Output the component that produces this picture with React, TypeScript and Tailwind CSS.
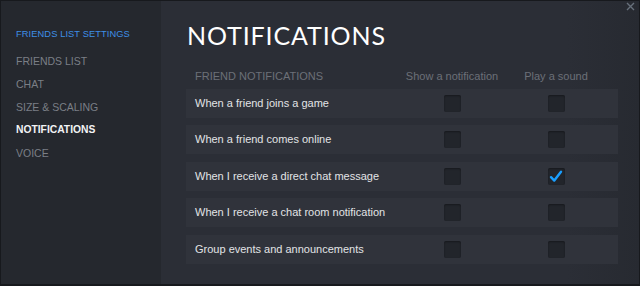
import React from "react";

type Row = {
  label: string;
  notify: boolean;
  sound: boolean;
};

const rows: Row[] = [
  { label: "When a friend joins a game", notify: false, sound: false },
  { label: "When a friend comes online", notify: false, sound: false },
  { label: "When I receive a direct chat message", notify: false, sound: true },
  { label: "When I receive a chat room notification", notify: false, sound: false },
  { label: "Group events and announcements", notify: false, sound: false },
];

const navItems = ["FRIENDS LIST", "CHAT", "SIZE & SCALING", "NOTIFICATIONS", "VOICE"];

const Checkbox = ({ checked }: { checked: boolean }) => (
  <div className="flex h-[17px] w-[17px] items-center justify-center rounded-[2px] bg-[#22252b] shadow-[inset_0_1px_2px_rgba(0,0,0,0.35)]">
    {checked && (
      <svg width="14" height="13" viewBox="0 0 14 13" fill="none">
        <path
          d="M2 7.2 L5.3 10.6 L12 1.8"
          stroke="#1a9fff"
          strokeWidth="2.4"
          strokeLinecap="round"
          strokeLinejoin="round"
        />
      </svg>
    )}
  </div>
);

const App = () => {
  return (
    <div className="flex h-[286px] w-[640px] overflow-hidden border-t border-l border-r border-b-2 border-[#17191d] font-['Liberation_Sans',Arial,sans-serif]">
      <aside className="flex w-[160px] shrink-0 flex-col bg-[#25282e] pl-[15px] pt-[28px]">
        <div className="text-[9.3px] leading-[10px] tracking-[0.01em] text-[#3e8fe6]">
          FRIENDS LIST SETTINGS
        </div>
        <nav className="mt-[17px] flex flex-col gap-[12.5px]">
          {navItems.map((item) => (
            <div
              key={item}
              className={
                item === "NOTIFICATIONS"
                  ? "text-[10.3px] leading-[10.5px] font-bold text-[#f2f3f4]"
                  : "text-[10.5px] leading-[10.5px] text-[#7b7f86]"
              }
            >
              {item}
            </div>
          ))}
        </nav>
      </aside>
      <main className="relative flex flex-1 flex-col bg-linear-to-r from-[#2b2e36] from-85% to-[#272a31] pl-[25px] pr-[21px] pt-[20px]">
        <button className="absolute right-[4px] top-[1px] text-[#67707b]">
          <svg width="9" height="9" viewBox="0 0 9 9">
            <path d="M1 1 L8 8 M8 1 L1 8" stroke="currentColor" strokeWidth="1.4" />
          </svg>
        </button>
        <h1 className="pl-[1px] font-['Lato',sans-serif] text-[25px] leading-[28px] tracking-[0.035em] text-white">
          NOTIFICATIONS
        </h1>
        <div className="mt-[21px] flex items-center pl-[9px] text-[11px] leading-[12px] text-[#6c7078]">
          <div className="flex-1">FRIEND NOTIFICATIONS</div>
          <div className="w-[104px] text-center">Show a notification</div>
          <div className="w-[104px] text-center">Play a sound</div>
          <div className="w-[10px]" />
        </div>
        <div className="mt-[6.5px] flex flex-col gap-[7.5px]">
          {rows.map((r) => (
            <div
              key={r.label}
              className="flex h-[29px] items-center bg-[#30333b] pl-[9px] text-[11px] text-[#e2e4e6]"
            >
              <div className="flex-1">{r.label}</div>
              <div className="flex w-[104px] justify-center">
                <Checkbox checked={r.notify} />
              </div>
              <div className="flex w-[104px] justify-center">
                <Checkbox checked={r.sound} />
              </div>
              <div className="w-[10px]" />
            </div>
          ))}
        </div>
      </main>
    </div>
  );
};

export default App;
